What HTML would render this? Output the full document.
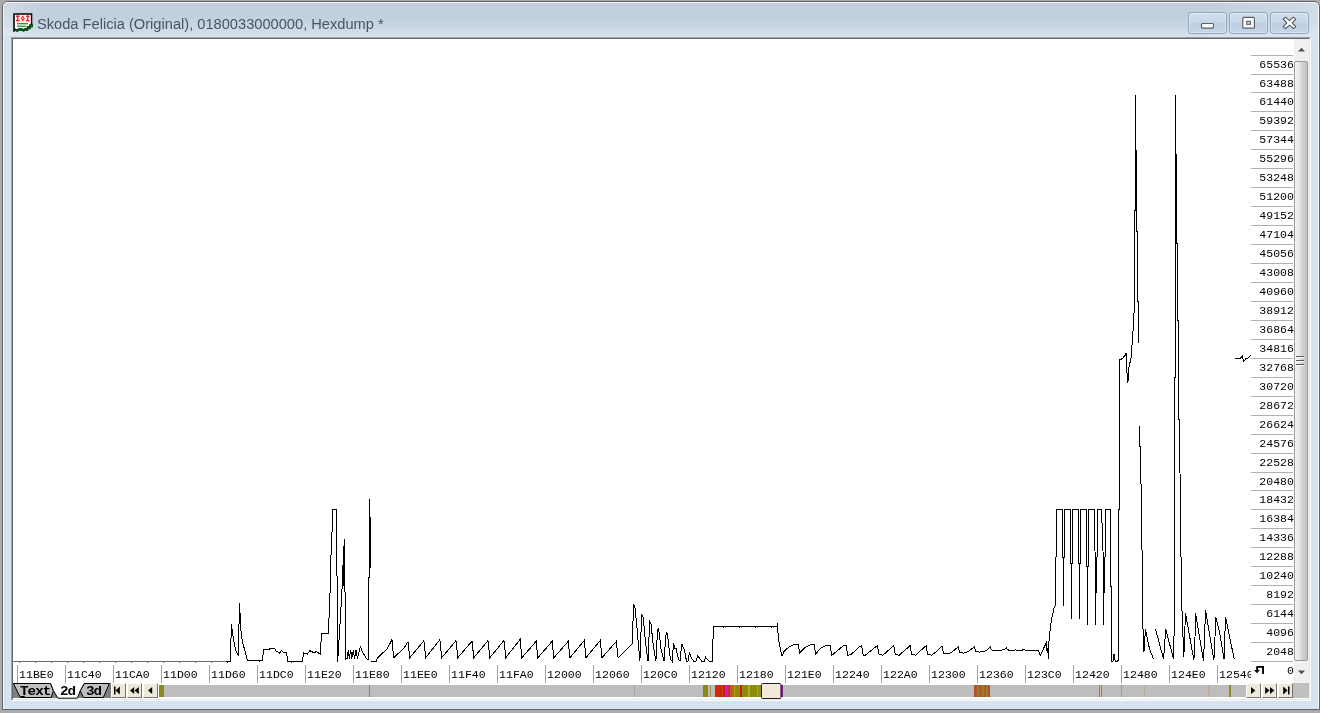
<!DOCTYPE html>
<html>
<head>
<meta charset="utf-8">
<title>Hexdump</title>
<style>
html,body{margin:0;padding:0;}
body{width:1320px;height:713px;overflow:hidden;background:#aaaaaa;position:relative;font-family:"Liberation Sans",sans-serif;}
.abs{position:absolute;}
.yl,.xl,.tabt,#title{will-change:transform;}
#win{position:absolute;left:2px;top:1px;width:1318px;height:709px;box-sizing:border-box;border:1px solid #5f6368;border-radius:6px 6px 0 0;
 background:linear-gradient(to bottom,#c3ccdc 2px,#bfd0da 11px,#c6d3e1 22px,#d9e4ed 36px,#d5e3f1 42px,#d5e3f1 100%);}
#win:before{content:"";position:absolute;left:0;top:0;right:0;bottom:0;border:1px solid #f2f6fb;border-radius:5px 5px 0 0;border-bottom-color:#d8e4f0;}
#title{position:absolute;left:37px;top:14px;height:20px;line-height:20px;font-size:14.65px;color:#485463;white-space:nowrap;letter-spacing:0px;}
.cb{position:absolute;top:12px;width:39px;height:22px;box-sizing:border-box;border:1px solid #93a6be;border-radius:3px;
 background:linear-gradient(to bottom,#d2deec 0%,#c8d7e8 45%,#bfd0e4 50%,#c3d4e7 100%);box-shadow:inset 0 0 0 1px rgba(255,255,255,.35);}
/* client edge */
#edge{position:absolute;left:11px;top:37px;width:1300px;height:664px;box-sizing:border-box;border:1px solid;border-color:#a0a4a8 #fbfcfe #fbfcfe #a0a4a8;}
#edge2{position:absolute;left:12px;top:38px;width:1298px;height:662px;box-sizing:border-box;border:1px solid;border-color:#63676b #e6e9ec #e6e9ec #63676b;background:#fff;}
.yt{position:absolute;left:1251px;width:42px;height:1px;background:#b0b0b0;}
.yl{position:absolute;left:1241px;width:53px;text-align:right;font-family:"Liberation Mono",monospace;font-size:11.5px;line-height:12px;height:12px;color:#000;letter-spacing:0.05px;}
.xt{position:absolute;top:665px;width:1px;height:18px;background:#a4a4a4;}
.xl{position:absolute;top:669px;font-family:"Liberation Mono",monospace;font-size:11.5px;line-height:12px;height:12px;color:#000;letter-spacing:0.05px;white-space:nowrap;}
#xclip{position:absolute;left:13px;top:0;width:1238px;height:713px;overflow:hidden;}
#xclip > div{position:absolute;left:-13px;top:0;}
.tabt{position:absolute;top:684px;letter-spacing:-0.9px;height:15px;line-height:15px;font-family:"Liberation Mono",monospace;font-weight:bold;font-size:13px;color:#000;white-space:nowrap;transform-origin:0 0;transform:scaleX(1.1);}
.nb{position:absolute;top:683px;width:15px;height:15px;box-sizing:border-box;background:#ece9d8;border:1px solid;border-color:#ffffff #77756c #77756c #ffffff;}
</style>
</head>
<body>
<div id="win"></div>
<div class="abs" style="left:4px;top:3px;width:40px;height:33px;background:linear-gradient(to right,rgba(255,255,255,.28),rgba(255,255,255,0));"></div>
<div class="abs" style="left:1200px;top:3px;width:118px;height:33px;background:linear-gradient(to right,rgba(225,238,250,0),rgba(225,238,250,.45));"></div>
<!-- icon -->
<svg class="abs" style="left:12px;top:12px" width="22" height="22" viewBox="0 0 22 22">
 <path d="M2 2 H19.5 V11.5 L20 13 H18 V15 H15.5 V17 H12.5 L11.5 18.2 L10 17 H6.5 L5 18.6 L3.5 17.4 L2 18.6 Z" fill="#fff" stroke="#000" stroke-width="1.6" stroke-linejoin="miter"/>
 <path d="M5 17.8 L6.5 16.6 H10 L11.5 17.8 L12.5 16.8 H15.3 V14.8 H17.8 V12.8 H19.8 V11.5 L21 13.5 V15.5 H19 V17.2 H16.3 V19 H13 L11.5 20 L10 19 H7 L5.2 20.2 L3.5 19 L2 20 V18.6 L3.5 17.4Z" fill="#0a5a1a"/>
 <rect x="3" y="3" width="15.6" height="7" fill="#fdeeee"/>
 <g fill="#e01818">
  <rect x="4" y="3.6" width="3.6" height="1.2"/><rect x="5.2" y="3.6" width="1.2" height="5.6"/><rect x="4" y="8" width="3.6" height="1.2"/>
  <rect x="14" y="3.6" width="3.6" height="1.2"/><rect x="15.2" y="3.6" width="1.2" height="5.6"/><rect x="14" y="8" width="3.6" height="1.2"/>
  <path d="M10.8 3.6 L12.8 6.4 L10.8 9.2 L8.8 6.4Z"/>
 </g>
 <rect x="10.2" y="5.6" width="1.2" height="1.6" fill="#fff"/>
 <rect x="5" y="11" width="11" height="1.4" fill="#28a038"/>
 <rect x="5" y="13.6" width="9" height="1.4" fill="#28a038"/>
 <rect x="3" y="10" width="15.6" height="1" fill="#e8f8e8"/>
</svg>
<div id="title">Skoda Felicia (Original), 0180033000000, Hexdump *</div>
<!-- caption buttons -->
<div class="cb" style="left:1188px"></div>
<div class="cb" style="left:1229px"></div>
<div class="cb" style="left:1270px"></div>
<svg class="abs" style="left:1188px;top:12px" width="121" height="22" viewBox="0 0 121 22">
 <!-- minimize -->
 <rect x="13.5" y="11.5" width="12" height="4.6" rx="1" fill="#fdfdfd" stroke="#5a6068" stroke-width="1.2"/>
 <!-- maximize -->
 <rect x="54.8" y="5.4" width="11.6" height="10.8" rx="1" fill="#fdfdfd" stroke="#5a6068" stroke-width="1.2"/>
 <rect x="58.7" y="9.3" width="3.8" height="3" fill="#c5d5e8" stroke="#5a6068" stroke-width="1.1"/>
 <!-- close -->
 <g transform="translate(101.5,10.9)">
  <path d="M-6.3 -3.7 L-3.9 -5.7 L0 -2.3 L3.9 -5.7 L6.3 -3.7 L2.7 0 L6.3 3.7 L3.9 5.7 L0 2.3 L-3.9 5.7 L-6.3 3.7 L-2.7 0 Z" fill="#fdfdfd" stroke="#50565e" stroke-width="1.1" stroke-linejoin="round"/>
 </g>
</svg>

<div id="edge"></div>
<div id="edge2"></div>

<!-- y axis -->
<div class="yt" style="top:661px"></div>
<div class="yt" style="top:642px"></div>
<div class="yt" style="top:623px"></div>
<div class="yt" style="top:604px"></div>
<div class="yt" style="top:585px"></div>
<div class="yt" style="top:566px"></div>
<div class="yt" style="top:547px"></div>
<div class="yt" style="top:528px"></div>
<div class="yt" style="top:509px"></div>
<div class="yt" style="top:490px"></div>
<div class="yt" style="top:472px"></div>
<div class="yt" style="top:453px"></div>
<div class="yt" style="top:434px"></div>
<div class="yt" style="top:415px"></div>
<div class="yt" style="top:396px"></div>
<div class="yt" style="top:377px"></div>
<div class="yt" style="top:358px"></div>
<div class="yt" style="top:339px"></div>
<div class="yt" style="top:320px"></div>
<div class="yt" style="top:301px"></div>
<div class="yt" style="top:282px"></div>
<div class="yt" style="top:263px"></div>
<div class="yt" style="top:244px"></div>
<div class="yt" style="top:225px"></div>
<div class="yt" style="top:206px"></div>
<div class="yt" style="top:187px"></div>
<div class="yt" style="top:168px"></div>
<div class="yt" style="top:149px"></div>
<div class="yt" style="top:130px"></div>
<div class="yt" style="top:111px"></div>
<div class="yt" style="top:92px"></div>
<div class="yt" style="top:74px"></div>
<div class="yt" style="top:55px"></div>
<div class="yl" style="top:646px">2048</div>
<div class="yl" style="top:627px">4096</div>
<div class="yl" style="top:608px">6144</div>
<div class="yl" style="top:589px">8192</div>
<div class="yl" style="top:570px">10240</div>
<div class="yl" style="top:551px">12288</div>
<div class="yl" style="top:532px">14336</div>
<div class="yl" style="top:513px">16384</div>
<div class="yl" style="top:494px">18432</div>
<div class="yl" style="top:476px">20480</div>
<div class="yl" style="top:457px">22528</div>
<div class="yl" style="top:438px">24576</div>
<div class="yl" style="top:419px">26624</div>
<div class="yl" style="top:400px">28672</div>
<div class="yl" style="top:381px">30720</div>
<div class="yl" style="top:362px">32768</div>
<div class="yl" style="top:343px">34816</div>
<div class="yl" style="top:324px">36864</div>
<div class="yl" style="top:305px">38912</div>
<div class="yl" style="top:286px">40960</div>
<div class="yl" style="top:267px">43008</div>
<div class="yl" style="top:248px">45056</div>
<div class="yl" style="top:229px">47104</div>
<div class="yl" style="top:210px">49152</div>
<div class="yl" style="top:191px">51200</div>
<div class="yl" style="top:172px">53248</div>
<div class="yl" style="top:153px">55296</div>
<div class="yl" style="top:134px">57344</div>
<div class="yl" style="top:115px">59392</div>
<div class="yl" style="top:96px">61440</div>
<div class="yl" style="top:78px">63488</div>
<div class="yl" style="top:59px">65536</div>
<div class="yl" style="top:665px">0</div>
<!-- x axis labels (clipped) -->
<div id="xclip"><div>
<div class="xt" style="left:17px"></div><div class="xl" style="left:19px">11BE0</div>
<div class="xt" style="left:65px"></div><div class="xl" style="left:67px">11C40</div>
<div class="xt" style="left:113px"></div><div class="xl" style="left:115px">11CA0</div>
<div class="xt" style="left:161px"></div><div class="xl" style="left:163px">11D00</div>
<div class="xt" style="left:209px"></div><div class="xl" style="left:211px">11D60</div>
<div class="xt" style="left:257px"></div><div class="xl" style="left:259px">11DC0</div>
<div class="xt" style="left:305px"></div><div class="xl" style="left:307px">11E20</div>
<div class="xt" style="left:353px"></div><div class="xl" style="left:355px">11E80</div>
<div class="xt" style="left:401px"></div><div class="xl" style="left:403px">11EE0</div>
<div class="xt" style="left:449px"></div><div class="xl" style="left:451px">11F40</div>
<div class="xt" style="left:497px"></div><div class="xl" style="left:499px">11FA0</div>
<div class="xt" style="left:545px"></div><div class="xl" style="left:547px">12000</div>
<div class="xt" style="left:593px"></div><div class="xl" style="left:595px">12060</div>
<div class="xt" style="left:641px"></div><div class="xl" style="left:643px">120C0</div>
<div class="xt" style="left:689px"></div><div class="xl" style="left:691px">12120</div>
<div class="xt" style="left:737px"></div><div class="xl" style="left:739px">12180</div>
<div class="xt" style="left:785px"></div><div class="xl" style="left:787px">121E0</div>
<div class="xt" style="left:833px"></div><div class="xl" style="left:835px">12240</div>
<div class="xt" style="left:881px"></div><div class="xl" style="left:883px">122A0</div>
<div class="xt" style="left:929px"></div><div class="xl" style="left:931px">12300</div>
<div class="xt" style="left:977px"></div><div class="xl" style="left:979px">12360</div>
<div class="xt" style="left:1025px"></div><div class="xl" style="left:1027px">123C0</div>
<div class="xt" style="left:1073px"></div><div class="xl" style="left:1075px">12420</div>
<div class="xt" style="left:1121px"></div><div class="xl" style="left:1123px">12480</div>
<div class="xt" style="left:1169px"></div><div class="xl" style="left:1171px">124E0</div>
<div class="xt" style="left:1217px"></div><div class="xl" style="left:1219px">12540</div>
</div></div>

<!-- vertical scrollbar -->
<div class="abs" style="left:1294px;top:39px;width:15px;height:644px;background:#f0f0f0;"></div>
<div class="abs" style="left:1294px;top:61px;width:14px;height:600px;box-sizing:border-box;border:1px solid #9a9a9c;border-radius:2px;background:linear-gradient(to right,#f5f5f5 0%,#e6e6e8 40%,#d2d2d5 58%,#c3c3c7 100%);"></div>
<svg class="abs" style="left:1294px;top:39px" width="15" height="644" viewBox="0 0 15 644" shape-rendering="crispEdges">
 <path d="M4 12.4 L7.5 8.8 L11 12.4 Z" fill="#505050" shape-rendering="geometricPrecision"/>
 <path d="M4 631.6 L7.5 635.2 L11 631.6 Z" fill="#505050" shape-rendering="geometricPrecision"/>
 <g fill="#58585c"><rect x="2" y="317" width="8" height="1"/><rect x="2" y="321" width="8" height="1"/><rect x="2" y="325" width="8" height="1"/></g>
 <g fill="#f8f8f8"><rect x="2" y="318" width="8" height="1"/><rect x="2" y="322" width="8" height="1"/><rect x="2" y="326" width="8" height="1"/></g>
</svg>

<!-- bottom bar -->
<div class="abs" style="left:13px;top:683px;width:98px;height:15px;background:#808080;"></div>
<div class="abs" style="left:1293px;top:683px;width:16px;height:15px;background:#c0c0c0;"></div>
<div class="nb" style="left:111px"></div><div class="nb" style="left:127px"></div><div class="nb" style="left:143px"></div>
<div class="nb" style="left:1246px"></div><div class="nb" style="left:1262px"></div><div class="nb" style="left:1278px"></div>
<svg class="abs" style="left:0;top:0" width="1320" height="713" viewBox="0 0 1320 713">
 <!-- axis baseline -->
 <rect x="13" y="661" width="214" height="1" fill="#6c6c6c" shape-rendering="crispEdges"/>
<rect x="19" y="662" width="1" height="1" fill="#7a7a7a" shape-rendering="crispEdges"/><rect x="35" y="662" width="1" height="1" fill="#7a7a7a" shape-rendering="crispEdges"/><rect x="51" y="662" width="1" height="1" fill="#7a7a7a" shape-rendering="crispEdges"/><rect x="67" y="662" width="1" height="1" fill="#7a7a7a" shape-rendering="crispEdges"/><rect x="83" y="662" width="1" height="1" fill="#7a7a7a" shape-rendering="crispEdges"/><rect x="99" y="662" width="1" height="1" fill="#7a7a7a" shape-rendering="crispEdges"/><rect x="115" y="662" width="1" height="1" fill="#7a7a7a" shape-rendering="crispEdges"/><rect x="131" y="662" width="1" height="1" fill="#7a7a7a" shape-rendering="crispEdges"/><rect x="147" y="662" width="1" height="1" fill="#7a7a7a" shape-rendering="crispEdges"/><rect x="163" y="662" width="1" height="1" fill="#7a7a7a" shape-rendering="crispEdges"/><rect x="179" y="662" width="1" height="1" fill="#7a7a7a" shape-rendering="crispEdges"/><rect x="195" y="662" width="1" height="1" fill="#7a7a7a" shape-rendering="crispEdges"/><rect x="211" y="662" width="1" height="1" fill="#7a7a7a" shape-rendering="crispEdges"/><rect x="227" y="662" width="1" height="1" fill="#222" shape-rendering="crispEdges"/><rect x="259" y="661" width="1" height="1" fill="#222" shape-rendering="crispEdges"/><rect x="291" y="662" width="1" height="1" fill="#222" shape-rendering="crispEdges"/>
 <!-- hscroll track -->
 <rect x="158.8" y="685" width="1087" height="12" fill="#bdbdbd" shape-rendering="crispEdges"/>
 <g shape-rendering="crispEdges">
<rect x="159.0" y="685" width="5.0" height="12" fill="#8a8a1c"/>
<rect x="369.0" y="685" width="1.0" height="12" fill="#8f8f30"/>
<rect x="634.0" y="685" width="1.0" height="12" fill="#a8a8a8"/>
<rect x="703.0" y="685" width="5.0" height="12" fill="#8a8a10"/>
<rect x="710.0" y="685" width="1.0" height="12" fill="#a09050"/>
<rect x="715.0" y="685" width="5.0" height="12" fill="#d82808"/>
<rect x="720.0" y="685" width="2.0" height="12" fill="#b83010"/>
<rect x="722.0" y="685" width="1.0" height="12" fill="#d84010"/>
<rect x="723.0" y="685" width="2.4" height="12" fill="#b82818"/>
<rect x="725.4" y="685" width="3.0" height="12" fill="#e010d8"/>
<rect x="728.4" y="685" width="1.1" height="12" fill="#c03030"/>
<rect x="729.5" y="685" width="4.7" height="12" fill="#c06018"/>
<rect x="734.2" y="685" width="0.8" height="12" fill="#b0a030"/>
<rect x="735.0" y="685" width="5.0" height="12" fill="#8c8c08"/>
<rect x="740.0" y="685" width="2.0" height="12" fill="#d81010"/>
<rect x="742.0" y="685" width="6.4" height="12" fill="#8c8c08"/>
<rect x="748.4" y="685" width="1.6" height="12" fill="#b0a838"/>
<rect x="750.0" y="685" width="6.7" height="12" fill="#8c8c08"/>
<rect x="756.7" y="685" width="0.8" height="12" fill="#a8a040"/>
<rect x="757.5" y="685" width="3.8" height="12" fill="#909018"/>
<rect x="780.8" y="685" width="1.8" height="12" fill="#8c1090"/>
<rect x="974.2" y="685" width="2.8" height="12" fill="#b05030"/>
<rect x="977.0" y="685" width="2.3" height="12" fill="#988020"/>
<rect x="979.3" y="685" width="2.3" height="12" fill="#b05830"/>
<rect x="981.6" y="685" width="2.8" height="12" fill="#988020"/>
<rect x="984.4" y="685" width="1.2" height="12" fill="#b05830"/>
<rect x="985.6" y="685" width="2.2" height="12" fill="#988020"/>
<rect x="987.8" y="685" width="2.3" height="12" fill="#b05030"/>
<rect x="1099.0" y="685" width="1.0" height="12" fill="#b87828"/>
<rect x="1100.0" y="685" width="1.0" height="12" fill="#d8c8a0"/>
<rect x="1101.0" y="685" width="1.0" height="12" fill="#b87828"/>
<rect x="1121.0" y="685" width="1.0" height="12" fill="#a8a070"/>
<rect x="1144.0" y="685" width="1.0" height="12" fill="#b8b098"/>
<rect x="1208.0" y="685" width="1.5" height="12" fill="#c0b098"/>
<rect x="1229.3" y="685" width="1.3" height="12" fill="#8c8c20"/>
 </g>
 <rect x="761.5" y="683.5" width="19.4" height="15" rx="1" fill="#f1e9da" stroke="#2c2020" stroke-width="1"/>
 <!-- tabs -->
 <path d="M13.4 683.5 L50.6 683.5 L53.4 690.6 L51.2 697.5 L20.3 697.5 Z" fill="#c0c0c0" stroke="#000" stroke-width="1" stroke-linejoin="miter"/>
 <path d="M84.2 683.5 L109.4 683.5 L103.3 697.5 L83.3 697.5 L80.3 690.6 Z" fill="#c0c0c0" stroke="#000" stroke-width="1"/>
 <path d="M50.6 683 L53.4 690.6 L57.9 698.3 L77.3 698.3 L80.3 690.6 L84.2 683 Z" fill="#fff"/>
 <path d="M50.6 683.5 L53.4 690.6 L57.9 698.2 L77.3 698.2 L80.3 690.6 L84.2 683.5" fill="none" stroke="#000" stroke-width="1"/>
 <rect x="20.4" y="696" width="4.4" height="1.2" fill="#000"/>
 <!-- nav glyphs -->
 <g fill="#000">
  <rect x="114" y="686.5" width="1.5" height="8"/><path d="M119.8 686.5 L119.8 694.5 L115.6 690.5Z"/>
  <path d="M134.2 687 L134.2 694 L130 690.5Z"/><path d="M138.8 687 L138.8 694 L134.6 690.5Z"/>
  <path d="M152.2 687 L152.2 694 L148 690.5Z"/>
  <path d="M1251 687 L1251 694 L1255.4 690.5Z"/>
  <path d="M1265.2 687 L1265.2 694 L1269.6 690.5Z"/><path d="M1270 687 L1270 694 L1274.4 690.5Z"/>
  <path d="M1283.2 686.5 L1283.2 694.5 L1287.6 690.5Z"/><rect x="1288" y="686.5" width="1.5" height="8"/>
 </g>
 <!-- return icon -->
 <g fill="#000"><rect x="1256.6" y="666" width="7.4" height="1.8"/><rect x="1262.1" y="666" width="1.9" height="8"/><rect x="1256.2" y="666.6" width="1.9" height="4.4"/><path d="M1253.9 670 H1260 L1257 673.2 Z"/></g>
 <!-- waveform -->
 <g fill="none" stroke="#000" stroke-width="1" shape-rendering="crispEdges" stroke-linejoin="miter">
<polyline points="226.0,661.5 230.7,661.5 230.9,642.8 231.4,624.2 233.5,639.4 235.7,650.6 238.3,655.7 238.9,629.3 239.5,603.2 240.8,629.3 242.4,641.6 245.8,654.0 247.5,660.5 262.1,660.5 263.8,649.5 269.4,649.2 270.0,648.1 274.7,648.1 275.6,650.6 280.0,653.4 281.4,650.6 282.9,652.0 286.2,652.0 287.9,661.0 302.5,661.0 303.6,652.9 307.5,654.0 309.8,650.6 314.3,652.9 316.0,651.4 320.2,654.2 321.6,633.2 328.3,633.2 328.9,621.0 330.1,590.9 330.9,558.0 332.2,527.8 332.7,509.5 336.2,509.5 336.7,558.0 337.2,585.8 337.7,661.5 338.5,648.9 340.2,621.0 342.2,585.8 343.5,553.0 344.5,539.0 344.8,585.8 345.3,601.0 345.8,659.0 347.3,658.5 348.3,650.0 349.3,658.5 350.8,650.0 351.8,658.5 353.3,650.0 354.6,658.5 356.1,650.0 357.4,658.5 360.4,646.9 362.9,652.7 366.7,659.0 368.5,659.5 368.5,578.3 369.5,577.0 369.5,498.8 370.5,534.0 370.5,568.0"/>
<polyline points="371.0,661.5 376.1,661.4 377.7,657.7 387.3,648.6 392.0,639.6 393.6,657.7 403.7,648.6 408.0,641.7 409.8,657.7 423.9,640.7 425.7,657.7 439.9,639.6 441.7,657.7 456.0,640.7 457.8,657.7 472.0,641.2 473.8,657.7 488.0,640.7 489.8,657.7 504.0,640.5 505.8,657.7 520.1,639.4 521.9,657.7 536.1,641.4 537.9,657.7 552.1,641.4 553.9,657.7 568.2,641.4 570.0,657.7 584.2,640.5 586.0,657.7 600.2,640.5 602.0,657.7 616.3,641.4 618.1,657.7 632.6,643.3 632.9,623.7 633.8,604.0 635.1,608.0 637.3,631.5 639.9,661.3 640.7,638.3 641.8,615.3 643.2,617.0 645.2,639.4 648.0,661.3 649.1,634.9 649.9,621.7 651.0,623.7 653.1,643.9 655.9,661.3 657.0,640.5 658.1,628.5 659.2,632.7 660.9,648.4 664.1,661.3 665.4,640.5 666.3,632.4 667.4,633.2 669.3,650.6 670.5,659.0 672.1,661.3 673.5,643.3 674.9,648.4 676.1,648.4 678.3,658.5 680.0,661.3 681.7,643.7 683.4,648.4 684.5,649.5 686.5,661.3 687.9,661.3 689.5,652.3 691.2,657.9 694.0,661.3 695.9,661.3 697.7,655.7 699.6,658.5 701.9,661.3 704.1,661.3 705.6,657.3 707.5,659.6 709.7,661.3 712.3,661.3 712.8,643.9 713.6,626.3 722.6,626.3 723.2,627.3 723.8,626.3 738.9,626.3 739.5,627.3 740.1,626.3 754.7,626.3 755.3,627.3 755.9,626.3 770.8,626.3 771.4,627.3 772.0,626.3 777.1,626.3 777.5,623.0 777.7,630.3 779.2,643.6 782.0,656.4 783.8,651.5 788.6,647.3 794.1,644.6 798.6,644.6 799.5,653.3 804.4,647.9 810.5,644.6 814.5,644.6 815.5,654.5 820.2,648.5 825.0,646.0 830.1,645.8 831.7,655.5 843.2,645.8 846.2,645.5 847.8,655.5 851.0,654.5 859.5,646.7 861.7,645.5 863.2,655.2 865.3,655.2 877.4,645.5 879.0,654.3 882.9,655.2 893.8,645.5 895.2,654.3 899.2,655.2 910.2,645.5 911.4,654.3 915.6,655.2 926.3,645.5 927.5,654.3 931.6,655.2 935.0,652.7 942.0,646.3 943.5,653.1 947.7,653.9 952.0,652.1 958.3,646.7 959.5,652.1 963.5,653.1 968.3,651.5 974.4,646.7 975.6,651.3 979.6,652.1 985.9,650.9 990.2,646.7 991.4,649.9 995.6,650.9 1004.7,649.7 1006.3,647.3 1007.5,649.7 1011.4,650.9 1015.0,649.9 1022.0,650.4 1023.0,649.6 1027.0,650.4 1038.4,650.4 1040.3,655.1 1046.2,643.2 1047.2,652.7 1048.1,648.0 1048.4,659.4 1049.1,638.4 1051.5,619.3 1053.9,608.6 1055.5,605.0 1055.5,557.5 1056.5,556.5 1056.5,509.5 1062.5,509.5 1062.5,557.5 1063.5,557.5 1063.5,606.0 1063.5,557.5 1064.5,557.5 1064.5,509.5 1070.5,509.5 1070.5,563.5 1071.5,563.5 1071.5,618.5 1071.5,563.5 1072.5,563.5 1072.5,509.5 1078.5,509.5 1078.5,563.5 1079.5,563.5 1079.5,618.5 1079.5,563.5 1080.5,563.5 1080.5,509.5 1086.5,509.5 1086.5,566.5 1087.5,566.5 1087.5,624.5 1087.5,566.5 1088.5,566.5 1088.5,509.5 1094.5,509.5 1094.5,536.0 1095.5,566.5 1095.5,624.5 1095.5,566.5 1096.5,593.0 1097.3,536.0 1097.5,509.5 1101.5,509.5 1102.5,536.0 1103.5,566.5 1103.5,624.5 1103.5,566.5 1104.5,593.0 1105.3,536.0 1105.5,509.5 1110.5,509.5 1110.5,586.0 1111.5,586.0 1111.9,661.1 1113.0,661.1 1114.0,653.9 1115.2,661.1 1117.5,661.1 1118.5,660.0 1118.5,510.0 1119.5,509.0 1119.5,359.5 1122.0,358.9 1125.1,355.3 1126.2,353.1 1126.5,368.0 1127.9,382.5 1128.9,368.0 1131.2,356.6 1132.7,335.1 1133.7,322.5 1134.5,300.0 1134.5,210.0 1135.5,210.0 1135.5,95.0 1135.5,150.0 1136.5,150.0 1136.5,231.0 1137.5,231.0 1137.5,301.0 1138.5,301.0 1138.5,342.7"/>
<polyline points="1139.5,426.0 1139.5,446.0 1140.5,447.0 1141.3,504.5 1142.3,569.0 1142.9,625.9 1144.0,651.7 1145.5,629.3 1149.6,649.4 1153.6,659.3"/>
<polyline points="1155.6,629.3 1163.6,659.3 1165.7,629.3 1173.7,659.3 1174.5,600.0 1174.5,377.0 1175.5,377.0 1175.5,95.0 1175.5,154.0 1176.5,154.0 1176.5,243.0 1177.5,243.0 1177.5,320.0 1178.5,320.0 1178.5,419.0 1179.5,419.0 1180.3,504.5 1181.6,601.0 1183.8,657.3 1185.5,613.0 1193.9,660.4 1195.0,637.0 1195.6,613.0 1203.5,661.2 1204.6,634.9 1205.5,610.2 1213.9,660.4 1215.0,637.0 1215.8,616.9 1219.7,633.2 1224.0,659.3 1224.8,637.0 1225.5,616.9 1234.3,659.5"/>
<polyline points="1235.1,358.7 1240.5,358.0 1242.3,355.9 1243.6,361.5 1245.9,358.7 1248.0,357.9 1250.8,355.2"/>
<line x1="343.8" y1="553" x2="343.8" y2="586" stroke-width="1.6"/>

 </g>
</svg>
<div class="tabt" style="left:19.7px">Text</div>
<div class="tabt" style="left:60.1px">2d</div>
<div class="tabt" style="left:85.6px">3d</div>
</body>
</html>
